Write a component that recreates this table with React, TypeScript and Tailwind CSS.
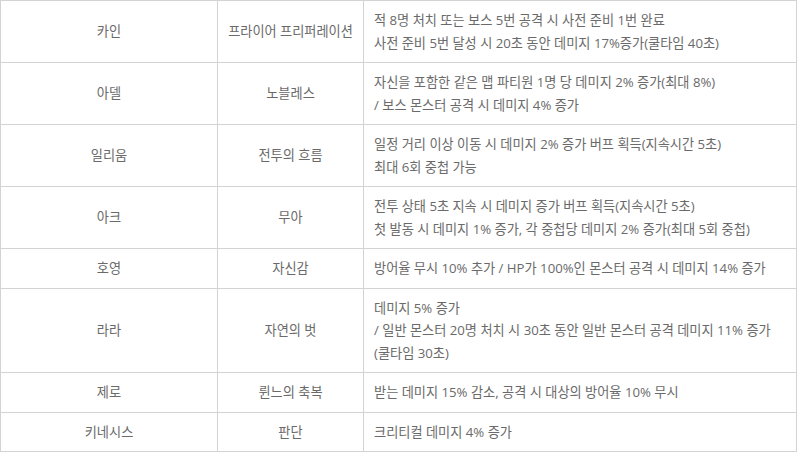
import React from "react";

type Row = { name: string; skill: string; desc: string[] };

const rows: Row[] = [
  {
    name: "카인",
    skill: "프라이어 프리퍼레이션",
    desc: [
      "적 8명 처치 또는 보스 5번 공격 시 사전 준비 1번 완료",
      "사전 준비 5번 달성 시 20초 동안 데미지 17%증가(쿨타임 40초)",
    ],
  },
  {
    name: "아델",
    skill: "노블레스",
    desc: [
      "자신을 포함한 같은 맵 파티원 1명 당 데미지 2% 증가(최대 8%)",
      "/ 보스 몬스터 공격 시 데미지 4% 증가",
    ],
  },
  {
    name: "일리움",
    skill: "전투의 흐름",
    desc: [
      "일정 거리 이상 이동 시 데미지 2% 증가 버프 획득(지속시간 5초)",
      "최대 6회 중첩 가능",
    ],
  },
  {
    name: "아크",
    skill: "무아",
    desc: [
      "전투 상태 5초 지속 시 데미지 증가 버프 획득(지속시간 5초)",
      "첫 발동 시 데미지 1% 증가, 각 중첩당 데미지 2% 증가(최대 5회 중첩)",
    ],
  },
  {
    name: "호영",
    skill: "자신감",
    desc: ["방어율 무시 10% 추가 / HP가 100%인 몬스터 공격 시 데미지 14% 증가"],
  },
  {
    name: "라라",
    skill: "자연의 벗",
    desc: [
      "데미지 5% 증가",
      "/ 일반 몬스터 20명 처치 시 30초 동안 일반 몬스터 공격 데미지 11% 증가",
      "(쿨타임 30초)",
    ],
  },
  {
    name: "제로",
    skill: "륀느의 축복",
    desc: ["받는 데미지 15% 감소, 공격 시 대상의 방어율 10% 무시"],
  },
  {
    name: "키네시스",
    skill: "판단",
    desc: ["크리티컬 데미지 4% 증가"],
  },
];

export default function App() {
  return (
    <div className="bg-white w-[797px] h-[455px] font-['Open_Sans','Noto_Sans_CJK_KR',sans-serif] text-[13.2px] leading-[22.5px] text-[#6a6a6a]">
      <table className="w-[796px] border-collapse table-fixed">
        <colgroup>
          <col className="w-[217px]" />
          <col className="w-[146px]" />
          <col className="w-[433px]" />
        </colgroup>
        <tbody>
          {rows.map((r) => (
            <tr key={r.name}>
              <td className="border border-[#d3d3d3] py-2 text-center">{r.name}</td>
              <td className="border border-[#d3d3d3] py-2 text-center">{r.skill}</td>
              <td className="border border-[#d3d3d3] py-2 pl-[10px] pr-1">
                {r.desc.map((line) => (
                  <div key={line} className="whitespace-nowrap">
                    {line}
                  </div>
                ))}
              </td>
            </tr>
          ))}
        </tbody>
      </table>
    </div>
  );
}
